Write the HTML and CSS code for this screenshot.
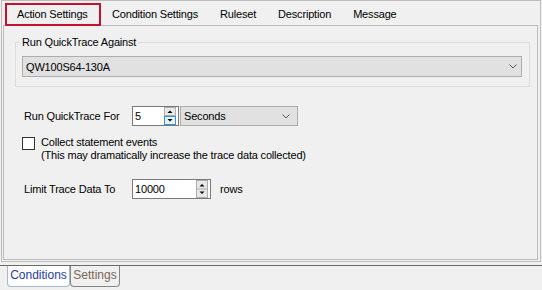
FILE: index.html
```html
<!DOCTYPE html>
<html>
<head>
<meta charset="utf-8">
<link rel="stylesheet" href="styles.css">
</head>
<body>
<div class="frame">
  <div class="tabs">
    <div class="tab active">Action Settings</div>
    <div class="tab">Condition Settings</div>
    <div class="tab">Ruleset</div>
    <div class="tab">Description</div>
    <div class="tab">Message</div>
  </div>
  <div class="panel">
    <fieldset class="group">
      <legend>Run QuickTrace Against</legend>
      <div class="combo combo-wide">
        <span>QW100S64-130A</span>
        <svg class="chev" width="8" height="5" viewBox="0 0 8 5"><path d="M0.5 0.5L4 4L7.5 0.5" fill="none" stroke="#5a5a5a" stroke-width="1"/></svg>
      </div>
    </fieldset>

    <div class="row row-for">
      <span class="label">Run QuickTrace For</span>
      <div class="spin spin-short">
        <span class="val">5</span>
        <svg class="spinbtn" width="12" height="18" viewBox="0 0 12 18">
          <rect x="0.5" y="0.5" width="11" height="8" fill="#e8e8e8" stroke="#adadad"/>
          <path d="M3.5 6h5L6 3.5z" fill="#000"/>
          <rect x="0.5" y="9.5" width="11" height="8" fill="#e5f1fb" stroke="#3d8fd6"/>
          <path d="M3.5 12h5L6 14.5z" fill="#000"/>
        </svg>
      </div>
      <div class="combo combo-sec">
        <span>Seconds</span>
        <svg class="chev" width="8" height="5" viewBox="0 0 8 5"><path d="M0.5 0.5L4 4L7.5 0.5" fill="none" stroke="#5a5a5a" stroke-width="1"/></svg>
      </div>
    </div>

    <div class="check">
      <span class="box"></span>
      <div class="ctext">Collect statement events<br>(This may dramatically increase the trace data collected)</div>
    </div>

    <div class="row row-limit">
      <span class="label">Limit Trace Data To</span>
      <div class="spin spin-long">
        <span class="val">10000</span>
        <svg class="spinbtn" width="12" height="18" viewBox="0 0 12 18">
          <rect x="0.5" y="0.5" width="11" height="17" fill="#e8e8e8" stroke="#adadad"/>
          <path d="M0.5 9h11" stroke="#adadad"/>
          <path d="M3.5 6.5h5L6 4z" fill="#000"/>
          <path d="M3.5 11.5h5L6 14z" fill="#000"/>
        </svg>
      </div>
      <span class="unit">rows</span>
    </div>
  </div>
</div>
<div class="bottom">
  <div class="btab btab-on">Conditions</div>
  <div class="btab btab-off">Settings</div>
</div>
</body>
</html>
```
FILE: styles.css
```css
html, body {
  margin: 0;
  background: #f0f0f0;
}
body {
  padding: 0 0 0 1px;
  width: 542px;
  height: 290px;
  box-sizing: border-box;
  overflow: hidden;
  font-family: "Liberation Sans", Arial, sans-serif;
  font-size: 11px;
  letter-spacing: -0.18px;
  line-height: 14px;
  color: #000;
}
.frame {
  width: 540px;
  height: 262px;
  box-sizing: border-box;
  border: 1px solid #bdbdbd;
  display: flex;
  flex-direction: column;
}
.tabs {
  height: 24px;
  box-sizing: border-box;
  padding: 2px 0 0 3px;
  display: flex;
  flex: none;
}
.tab {
  height: 23px;
  line-height: 23px;
  padding: 0 11px;
  box-sizing: border-box;
  white-space: nowrap;
}
.tab.active {
  position: relative;
  z-index: 1;
  border: 2px solid #c4122f;
  line-height: 19px;
  padding: 0 10px;
  width: 96px;
  background: #f0f0f0;
}
.panel {
  flex: 1;
  margin: 0 2px 1px 1px;
  border: 1px solid #bdbdbd;
}
.group {
  margin: 9px 7px 0 11px;
  padding: 7px 7px 9px 6px;
  border: 1px solid #dcdcdc;
  min-width: 0;
}
.group legend {
  padding: 0 2px;
  margin-left: -2px;
  line-height: 14px;
}
.combo {
  height: 21px;
  box-sizing: border-box;
  border: 1px solid #adadad;
  background: #e1e1e1;
  display: flex;
  align-items: center;
  justify-content: space-between;
  padding: 0 4px 0 3px;
}
.combo-sec {
  width: 118px;
  height: 20px;
  margin-left: 1px;
  padding-right: 7px;
}
.chev { display: block; }
.row {
  display: flex;
  align-items: center;
  height: 20px;
  margin-left: 20px;
}
.row-for { margin-top: 19px; }
.row-limit { margin-top: 17px; }
.label { width: 108px; flex: none; }
.spin {
  height: 20px;
  box-sizing: border-box;
  border: 1px solid #7a7a7a;
  background: #fff;
  display: flex;
  align-items: center;
  justify-content: space-between;
  padding: 0 2px 0 2px;
}
.spin-short { width: 47px; }
.spin-long { width: 79px; }
.spinbtn { display: block; }
.unit { margin-left: 9px; }
.check {
  display: flex;
  align-items: flex-start;
  margin: 10px 0 0 18px;
}
.box {
  width: 13px;
  height: 13px;
  box-sizing: border-box;
  border: 1px solid #333;
  background: #fff;
  margin-top: 1px;
  margin-right: 6px;
  flex: none;
}
.ctext { line-height: 13px; }
.bottom {
  margin-top: 3px;
  margin-left: -1px;
  border-top: 1px solid #6a6a6a;
  padding-left: 7px;
  display: flex;
}
.btab {
  height: 21px;
  box-sizing: border-box;
  font-size: 12px;
  letter-spacing: 0;
  line-height: 19px;
  text-align: center;
  border: 1px solid;
  border-top: none;
  border-radius: 0 0 4px 4px;
}
.btab-on {
  width: 63px;
  background: #fff;
  border-color: #a9b9cc;
  color: #1e3c9e;
}
.btab-off {
  width: 50px;
  background: #f0f0f0;
  border-color: #858585;
  color: #7a6654;
}
```
